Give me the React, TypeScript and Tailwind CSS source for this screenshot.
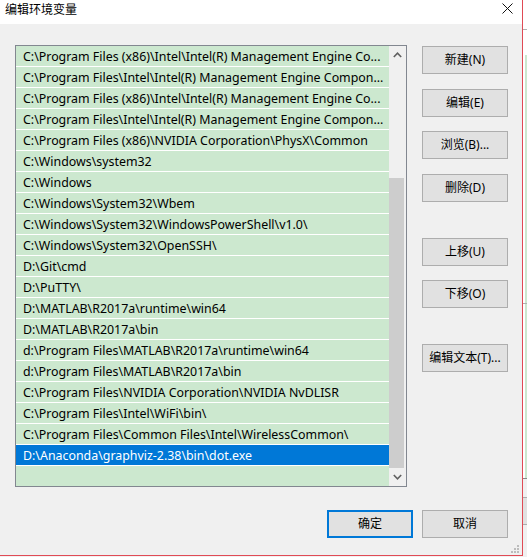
const rows = [
  "C:\\Program Files (x86)\\Intel\\Intel(R) Management Engine Co...",
  "C:\\Program Files\\Intel\\Intel(R) Management Engine Compon...",
  "C:\\Program Files (x86)\\Intel\\Intel(R) Management Engine Co...",
  "C:\\Program Files\\Intel\\Intel(R) Management Engine Compon...",
  "C:\\Program Files (x86)\\NVIDIA Corporation\\PhysX\\Common",
  "C:\\Windows\\system32",
  "C:\\Windows",
  "C:\\Windows\\System32\\Wbem",
  "C:\\Windows\\System32\\WindowsPowerShell\\v1.0\\",
  "C:\\Windows\\System32\\OpenSSH\\",
  "D:\\Git\\cmd",
  "D:\\PuTTY\\",
  "D:\\MATLAB\\R2017a\\runtime\\win64",
  "D:\\MATLAB\\R2017a\\bin",
  "d:\\Program Files\\MATLAB\\R2017a\\runtime\\win64",
  "d:\\Program Files\\MATLAB\\R2017a\\bin",
  "C:\\Program Files\\NVIDIA Corporation\\NVIDIA NvDLISR",
  "C:\\Program Files\\Intel\\WiFi\\bin\\",
  "C:\\Program Files\\Common Files\\Intel\\WirelessCommon\\",
  "D:\\Anaconda\\graphviz-2.38\\bin\\dot.exe",
];

const sideButtons = [
  { label: "新建(N)", mt: "mt-0" },
  { label: "编辑(E)", mt: "mt-[15px]" },
  { label: "浏览(B)...", mt: "mt-[14px]" },
  { label: "删除(D)", mt: "mt-[15px]" },
  { label: "上移(U)", mt: "mt-[36px]" },
  { label: "下移(O)", mt: "mt-[14px]" },
  { label: "编辑文本(T)...", mt: "mt-[36px]" },
];

function Button({ label, primary, className = "" }: { label: string; primary?: boolean; className?: string }) {
  return (
    <div
      className={`flex h-[28px] w-[86px] items-center justify-center bg-[#e1e1e1] text-[12px] text-black ${
        primary ? "border-2 border-[#0078d7]" : "border border-[#adadad]"
      } ${className}`}
    >
      {label}
    </div>
  );
}

export default function App() {
  return (
    <div
      className="flex h-[557px] w-[527px] bg-[#f0f0f0]"
      style={{ fontFamily: '"Noto Sans", "Noto Sans CJK SC", sans-serif' }}
    >
      <div className="relative flex h-[556px] w-[523px] shrink-0 flex-col border-r border-b border-[#e04a55] bg-[#f0f0f0]">
        {/* title bar */}
        <div className="flex h-[24px] items-center justify-between bg-white pl-[5px] pr-[9px]">
          <span className="-mt-[5px] text-[12px] leading-none text-black">编辑环境变量</span>
          <svg width="11" height="11" viewBox="0 0 11 11" className="-mt-[8px]">
            <path d="M0.5 0.5 L10.5 10.5 M10.5 0.5 L0.5 10.5" stroke="#111" strokeWidth="1" />
          </svg>
        </div>

        <div className="flex flex-col pl-[15px] pt-[21px]">
          <div className="flex">
            {/* list box */}
            <div className="flex h-[442px] w-[392px] border border-[#828790]">
              <div className="w-[373px] overflow-hidden bg-[#cce8cf]">
                {rows.map((r, i) => {
                  const sel = i === rows.length - 1;
                  return (
                    <div
                      key={i}
                      className={`h-[21px] whitespace-nowrap border-b border-white pl-[7px] pt-[1px] text-[12.4px] leading-[20px] ${
                        sel ? "bg-[#0078d7] text-white" : "text-black"
                      } ${i === 0 ? "" : ""}`}
                    >
                      {r}
                    </div>
                  );
                })}
              </div>
              {/* scrollbar */}
              <div className="flex w-[17px] flex-col bg-[#f0f0f0]">
                <div className="flex h-[17px] items-center justify-center">
                  <svg width="9" height="6" viewBox="0 0 9 6" className="-ml-[1px] mt-[1px]">
                    <path d="M0.8 5 L4.5 1.2 L8.2 5" fill="none" stroke="#606060" strokeWidth="1.6" />
                  </svg>
                </div>
                <div className="h-[115px]" />
                <div className="h-[290px] w-[15px] bg-[#cdcdcd]" />
                <div className="flex h-[18px] items-center justify-center">
                  <svg width="9" height="6" viewBox="0 0 9 6" className="-ml-[1px]">
                    <path d="M0.8 1 L4.5 4.8 L8.2 1" fill="none" stroke="#606060" strokeWidth="1.6" />
                  </svg>
                </div>
              </div>
            </div>

            {/* side buttons */}
            <div className="ml-[15px] mt-[1px] flex flex-col">
              {sideButtons.map((b) => (
                <Button key={b.label} label={b.label} className={b.mt} />
              ))}
            </div>
          </div>

          {/* bottom buttons */}
          <div className="ml-[312px] mt-[23px] flex gap-[9px]">
            <Button label="确定" primary />
            <Button label="取消" />
          </div>
        </div>

        {/* resize grip */}
        <svg width="9" height="9" viewBox="0 0 9 9" className="absolute bottom-[1px] right-[2px]">
          <rect x="6" y="0" width="2" height="2" fill="#bcbcbc" />
          <rect x="3" y="3" width="2" height="2" fill="#bcbcbc" />
          <rect x="6" y="3" width="2" height="2" fill="#bcbcbc" />
          <rect x="0" y="6" width="2" height="2" fill="#bcbcbc" />
          <rect x="3" y="6" width="2" height="2" fill="#bcbcbc" />
          <rect x="6" y="6" width="2" height="2" fill="#bcbcbc" />
        </svg>
      </div>

      {/* background window sliver */}
      <div className="flex w-[4px] flex-col">
        <div className="h-[29px] bg-white" />
        <div className="h-[1px] bg-[#b0b0b0]" />
        <div className="flex h-[273px] bg-white pt-[25px]">
          <div className="ml-[2px] h-full w-[2px] bg-[#cce8cf]" />
        </div>
        <div className="h-[1px] bg-[#b0b0b0]" />
        <div className="flex h-[174px] bg-white">
          <div className="ml-[2px] h-full w-[2px] bg-[#cce8cf]" />
        </div>
        <div className="h-[1px] bg-[#888]" />
        <div className="h-[18px] bg-[#f0f0f0]" />
        <div className="h-[1px] bg-[#adadad]" />
        <div className="h-[26px] bg-[#e1e1e1]" />
        <div className="h-[1px] bg-[#adadad]" />
        <div className="flex-1 bg-[#f0f0f0]" />
      </div>
    </div>
  );
}
